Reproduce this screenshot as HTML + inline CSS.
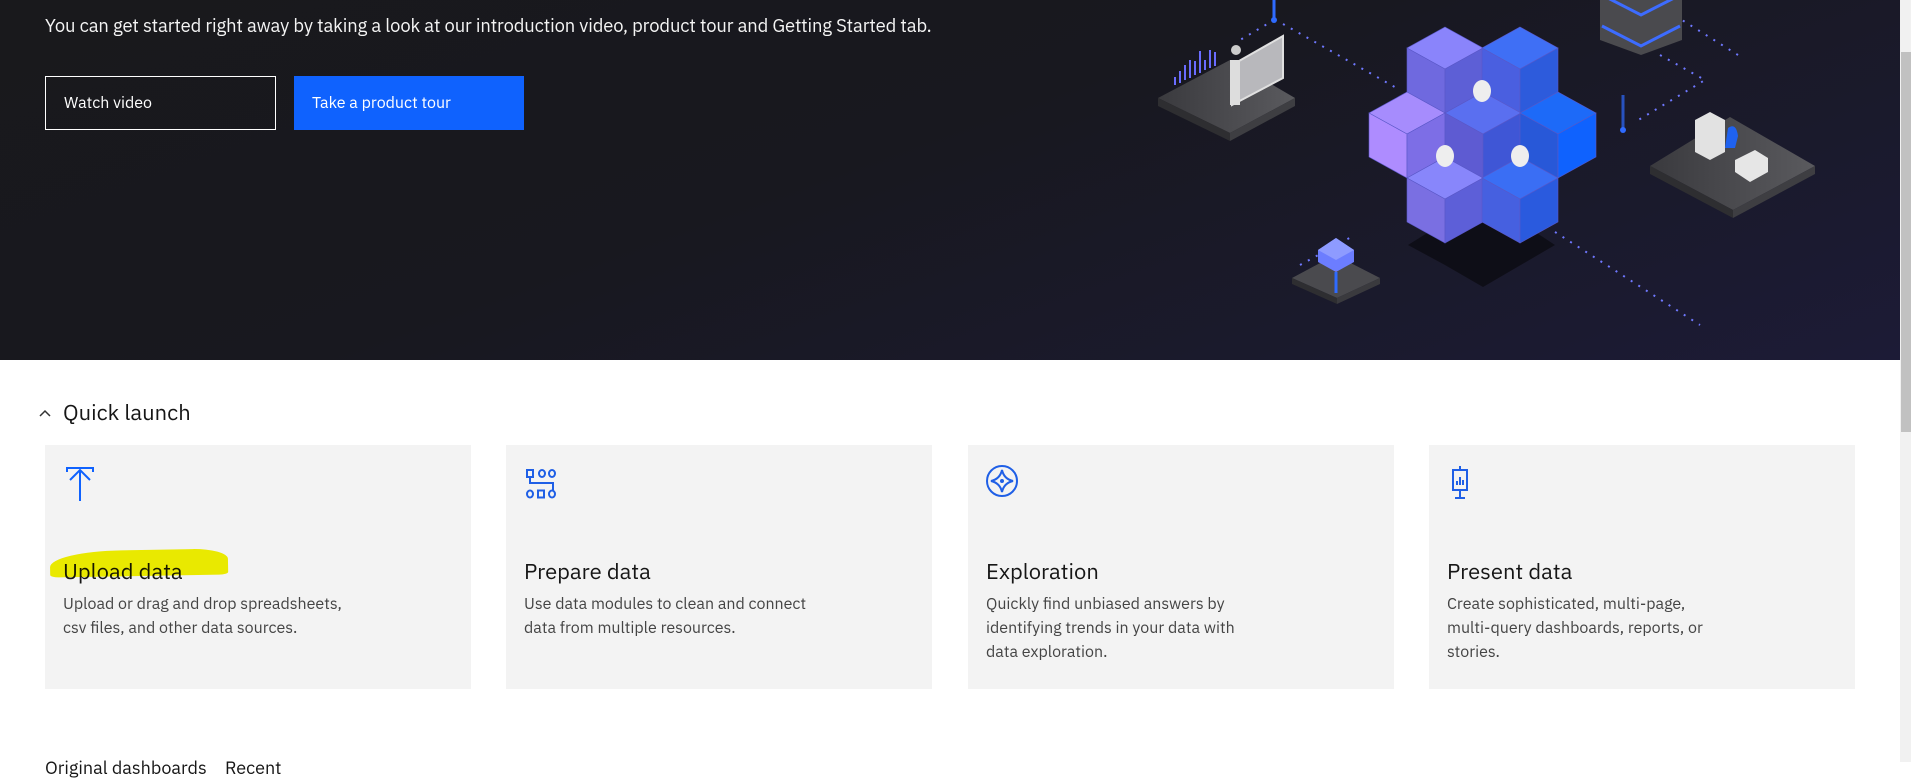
<!DOCTYPE html>
<html><head><meta charset="utf-8"><style>
*{margin:0;padding:0;box-sizing:border-box}
body{width:1911px;height:762px;overflow:hidden;background:#fff;font-family:"IBM Plex Sans","Liberation Sans",sans-serif;position:relative}
.hero{position:absolute;left:0;top:0;width:1900px;height:360px;background:linear-gradient(160deg,#19191c 0%,#18181f 45%,#1c1b36 100%)}
.intro{position:absolute;left:45px;top:14px;color:#f4f4f4;font-size:18.4px;letter-spacing:-0.12px}
.btn{position:absolute;top:76px;height:54px;font-size:16px;color:#fff;padding-left:18px;line-height:52px}
.b1{left:45px;width:231px;border:1.5px solid #fff}
.b2{left:294px;width:230px;background:#0f62fe;padding-left:18px;line-height:54px}
.ql{position:absolute;left:38px;top:398px;font-size:22px;color:#161616}
.ql svg{position:absolute;left:0;top:10px}
.ql b{font-weight:400;margin-left:25px}
.card{position:absolute;top:445px;width:426px;height:244px;background:#f3f3f3}
.card svg{position:absolute;left:18px;top:20px}
.card h3{position:absolute;left:18px;top:112px;font-size:22px;font-weight:400;color:#161616}
.card p{position:absolute;left:18px;top:147px;width:280px;font-size:16px;line-height:24px;color:#444}
.hl{position:absolute;left:50px;top:550px;width:178px;height:26px;background:#f5f500;border-radius:40% 20% 5% 5%/60% 40% 10% 10%;transform:rotate(-1deg)}
.sb{position:absolute;left:1900px;top:0;width:11px;height:762px;background:#f1f1f1}
.sb i{position:absolute;left:1px;top:52px;width:10px;height:380px;background:#c1c1c1}
.bt{position:absolute;top:756px;font-size:18px;color:#161616}
</style></head><body>
<div class="hero">
<div class="intro">You can get started right away by taking a look at our introduction video, product tour and Getting Started tab.</div>
<div class="btn b1">Watch video</div>
<div class="btn b2">Take a product tour</div>
<svg width="1900" height="360" style="position:absolute;left:0;top:0">
<defs>
<linearGradient id="pl" x1="0" x2="1"><stop offset="0" stop-color="#3a3a3e"/><stop offset="1" stop-color="#5a5a5e"/></linearGradient>
</defs>
<g stroke="#6f78ff" stroke-width="2" stroke-dasharray="2 7" fill="none">
<path d="M1274 20 L1240 40"/><path d="M1283 24 L1400 90"/>
<path d="M1738 55 L1650 0"/><path d="M1660 55 L1705 80 L1635 122"/>
<path d="M1555 232 L1700 325"/><path d="M1300 265 L1355 235"/>
</g>
<path d="M1274 0 V20" stroke="#2f6bff" stroke-width="3"/><circle cx="1274" cy="20" r="3" fill="#2f6bff"/>
<path d="M1623 95 V130" stroke="#2f6bff" stroke-width="3" opacity=".7"/><circle cx="1623" cy="130" r="3" fill="#2f6bff"/>
<polygon points="1158,98 1230,60 1295,98 1230,133" fill="url(#pl)"/>
<polygon points="1158,98 1230,133 1230,141 1158,106" fill="#2e2e31"/>
<polygon points="1230,133 1295,98 1295,106 1230,141" fill="#3e3e42"/>
<g stroke="#6a6cff" stroke-width="2"><path d="M1175 85v-8M1180 83v-12M1185 80v-15M1190 78v-18M1195 75v-14M1200 73v-22M1205 70v-10M1210 68v-18M1215 66v-14"/></g>
<polygon points="1232,65 1283,36 1283,78 1232,105" fill="#b8b8bc" stroke="#e0e0e0" stroke-width="2"/>
<circle cx="1236" cy="50" r="5" fill="#ccc"/><rect x="1230" y="60" width="10" height="45" fill="#ddd"/>
<polygon points="1600,-10 1641,-30 1682,-10 1682,40 1641,55 1600,40" fill="#4a4a4e"/>
<path d="M1602 -5 L1641 15 L1680 -5" stroke="#3d6cff" stroke-width="3" fill="none"/>
<path d="M1602 26 L1641 46 L1680 26" stroke="#3d6cff" stroke-width="3" fill="none"/>
<polygon points="1650,166 1730,117 1815,166 1733,210" fill="url(#pl)"/>
<polygon points="1650,166 1733,210 1733,218 1650,174" fill="#2e2e31"/>
<polygon points="1733,210 1815,166 1815,174 1733,218" fill="#3e3e42"/>
<polygon points="1695,120 1710,112 1725,120 1725,152 1710,160 1695,152" fill="#e2e2e2"/>
<polygon points="1735,160 1755,150 1768,158 1768,172 1750,182 1735,172" fill="#e6e6e6"/>
<path d="M1728 128 q8 -6 10 8 l-3 12 -10 0z" fill="#1f62f0"/>
<polygon points="1292,278 1335,255 1380,278 1337,298" fill="#4a4a4e"/>
<polygon points="1292,278 1337,298 1337,304 1292,284" fill="#2e2e31"/>
<polygon points="1337,298 1380,278 1380,284 1337,304" fill="#3a3a3e"/>
<polygon points="1318,250 1336,238 1354,250 1354,262 1336,272 1318,262" fill="#6c7dff"/>
<polygon points="1318,250 1336,238 1354,250 1336,260" fill="#8e9bff"/>
<path d="M1336 272 V293" stroke="#2f6bff" stroke-width="3"/>
<polygon points="1407,200 1483,155 1557,200 1520,222 1555,245 1483,287 1445,265 1408,245 1445,222" fill="#0d0d14" opacity=".85"/>
<g stroke="#5a58c8" stroke-width=".6">
<polygon points="1445,27 1483,48 1445,69 1407,48" fill="#8a84fb"/><polygon points="1407,48 1445,69 1445,113 1407,92" fill="#6f69df"/><polygon points="1445,69 1483,48 1483,92 1445,113" fill="#5d5fd6"/>
<polygon points="1520,27 1558,48 1520,69 1482,48" fill="#3f6ff5"/><polygon points="1482,48 1520,69 1520,113 1482,92" fill="#4a5fe0"/><polygon points="1520,69 1558,48 1558,92 1520,113" fill="#2d5bdc"/>
<polygon points="1407,92 1445,113 1407,134 1369,113" fill="#a68cfd"/><polygon points="1369,113 1407,134 1407,178 1369,157" fill="#ae8cff"/><polygon points="1407,134 1445,113 1445,157 1407,178" fill="#7d6ee6"/>
<polygon points="1483,92 1521,113 1483,134 1445,113" fill="#5a6ff0"/><polygon points="1445,113 1483,134 1483,178 1445,157" fill="#5e5bd2"/><polygon points="1483,134 1521,113 1521,157 1483,178" fill="#3f56d6"/>
<polygon points="1558,92 1596,113 1558,134 1520,113" fill="#1d6af8"/><polygon points="1520,113 1558,134 1558,178 1520,157" fill="#2858d8"/><polygon points="1558,134 1596,113 1596,157 1558,178" fill="#0f62fe"/>
<polygon points="1445,157 1483,178 1445,199 1407,178" fill="#8886fb"/><polygon points="1407,178 1445,199 1445,243 1407,222" fill="#7a6fe2"/><polygon points="1445,199 1483,178 1483,222 1445,243" fill="#5d5fd8"/>
<polygon points="1520,157 1558,178 1520,199 1482,178" fill="#3a6ef4"/><polygon points="1482,178 1520,199 1520,243 1482,222" fill="#4660e0"/><polygon points="1520,199 1558,178 1558,222 1520,243" fill="#2a5ade"/>
</g>
<ellipse cx="1482" cy="91" rx="9" ry="11" fill="#eee"/>
<ellipse cx="1445" cy="156" rx="9" ry="11" fill="#eee"/>
<ellipse cx="1520" cy="156" rx="9" ry="11" fill="#eee"/>
</svg>
</div>
<div class="ql"><svg width="14" height="10" viewBox="0 0 14 10" fill="none" stroke="#333" stroke-width="1.5"><path d="M2 8l5-5 5 5"/></svg><b>Quick launch</b></div>
<div class="card" style="left:45px">
<svg width="36" height="40" viewBox="0 0 36 40" fill="none" stroke="#0f62fe" stroke-width="2"><path d="M4 7V3h26v4"/><path d="M17 5v31M7 15l10-10 10 10"/></svg>
<h3>Upload data</h3>
<p>Upload or drag and drop spreadsheets, csv files, and other data sources.</p></div>
<div class="hl" style="mix-blend-mode:multiply"></div>
<div class="card" style="left:506px">
<svg width="36" height="40" viewBox="0 0 36 40" fill="none" stroke="#1f5fe6" stroke-width="2"><rect x="3" y="5" width="6" height="7"/><ellipse cx="18" cy="8.5" rx="3" ry="3.5"/><ellipse cx="28" cy="8.5" rx="3" ry="3.5"/><path d="M6 12v6h23v7"/><ellipse cx="6" cy="29" rx="3" ry="3.5"/><rect x="14" y="25.5" width="6" height="7"/><ellipse cx="28" cy="29" rx="3" ry="3.5"/></svg>
<h3>Prepare data</h3>
<p style="width:300px">Use data modules to clean and connect data from multiple resources.</p></div>
<div class="card" style="left:968px">
<svg width="40" height="40" viewBox="0 0 40 40" fill="none" stroke="#1f5fe6" stroke-width="2"><circle cx="16" cy="16" r="15"/><path d="M16 5 Q18 14 27 16 Q18 18 16 27 Q14 18 5 16 Q14 14 16 5Z"/><circle cx="16" cy="16" r="1" fill="#1f5fe6"/></svg>
<h3>Exploration</h3>
<p>Quickly find unbiased answers by identifying trends in your data with data exploration.</p></div>
<div class="card" style="left:1429px">
<svg width="36" height="40" viewBox="0 0 36 40" fill="none" stroke="#1f5fe6" stroke-width="2"><path d="M13 1v4"/><rect x="6" y="5" width="14" height="20"/><path d="M10 20v-4M13 20v-8M16 20v-5M13 25v8M8 33h10"/></svg>
<h3>Present data</h3>
<p>Create sophisticated, multi-page, multi-query dashboards, reports, or stories.</p></div>
<div class="bt" style="left:45px">Original dashboards</div>
<div class="bt" style="left:225px">Recent</div>
<div class="sb"><i></i></div>
</body></html>
